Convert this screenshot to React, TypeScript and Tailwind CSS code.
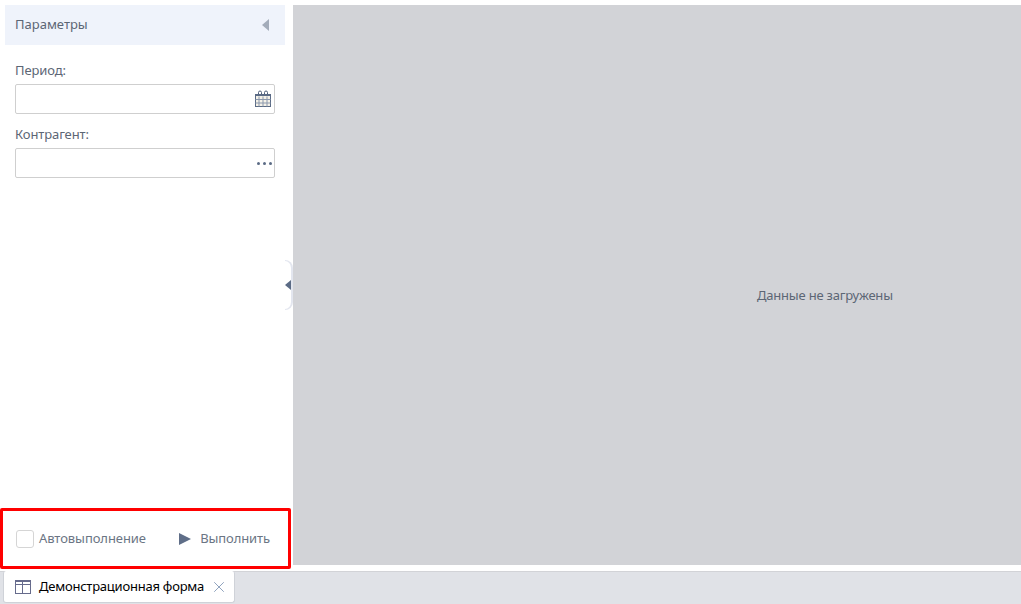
import { X } from "lucide-react";

const font = { fontFamily: '"Noto Sans", sans-serif' };

function CalendarIcon() {
  return (
    <svg className="mr-[1px] mb-[2px]" width="16" height="17" viewBox="0 0 16 17" fill="none">
      <path d="M3.5 4V2.5a1.5 1.5 0 0 1 3 0V4M9.5 4V2.5a1.5 1.5 0 0 1 3 0V4" stroke="#4f5f7a" />
      <rect x="0.5" y="4.5" width="15" height="12" fill="#f4f1e8" stroke="#5b6b85" />
      <path d="M0.5 5h15" stroke="#5b6b85" strokeWidth="2" />
      <path d="M0.5 9.5h15M0.5 13h15M4 6.5v10M8 6.5v10M12 6.5v10" stroke="#8b98ad" />
    </svg>
  );
}

function Field({ label, children }: { label: string; children: React.ReactNode }) {
  return (
    <div>
      <div className="h-[20px] text-[13px] leading-[20px] tracking-[-0.1px] text-[#5c6675]">{label}</div>
      <div className="mt-[4px] h-[30px] border border-[#cfcfcf] rounded-[2px] bg-white flex items-center justify-end pr-[2px]">
        {children}
      </div>
    </div>
  );
}

export default function App() {
  return (
    <div className="h-[604px] w-[1021px] flex flex-col bg-white overflow-hidden" style={font}>
      <div className="flex-1 min-h-0 flex pt-[5px] pb-[6px]">
        {/* Left panel */}
        <div className="w-[293px] shrink-0 flex flex-col relative">
          <div className="ml-[5px] w-[280px] h-[40px] bg-[#eff3fb] flex items-center justify-between pl-[10px] pr-[16px]">
            <span className="text-[13px] text-[#5c6675]">Параметры</span>
            <svg width="7" height="12" viewBox="0 0 7 12">
              <path d="M7 0v12L0 6z" fill="#a3acba" />
            </svg>
          </div>

          <div className="flex-1 pl-[15px] pr-[18px] pt-[15px] flex flex-col gap-[10px]">
            <Field label="Период:">
              <CalendarIcon />
            </Field>
            <Field label="Контрагент:">
              <div className="flex gap-[3px]">
                <span className="w-[3px] h-[3px] rounded-full bg-[#5b6b85]" />
                <span className="w-[3px] h-[3px] rounded-full bg-[#5b6b85]" />
                <span className="w-[3px] h-[3px] rounded-full bg-[#5b6b85]" />
              </div>
            </Field>
          </div>

          {/* Highlighted footer */}
          <div className="h-[61px] mb-[-4px] w-[291px] border-[3px] border-[#ff0000] rounded-[2px] flex items-center pl-[13px] pr-[18px] justify-between">
            <label className="flex items-center gap-[5px]">
              <span className="w-[18px] h-[18px] border border-[#d5d5d5] rounded-[3px] bg-white" />
              <span className="text-[13px] tracking-[-0.07px] text-[#6b7584]">Автовыполнение</span>
            </label>
            <div className="flex items-center gap-[9px]">
              <svg width="12" height="12" viewBox="0 0 12 12">
                <path d="M0 0l12 6-12 6z" fill="#5f6e88" />
              </svg>
              <span className="text-[13px] tracking-[-0.1px] text-[#6b7584]">Выполнить</span>
            </div>
          </div>

          {/* Collapse handle */}
          <div className="absolute right-0 top-[255px] w-[8px] h-[50px] bg-white border-r-2 border-y border-[#e3e6ef] rounded-r-[8px] flex items-center justify-end">
            <svg width="6" height="10" viewBox="0 0 6 10">
              <path d="M6 0v10L0 5z" fill="#5b6b85" />
            </svg>
          </div>
        </div>

        {/* Data area */}
        <div className="flex-1 bg-[#d2d3d7] flex items-center pl-[464px] pt-[22px]">
          <span className="text-[13px] tracking-[-0.2px] text-[#5c6675] whitespace-nowrap">Данные не загружены</span>
        </div>
      </div>

      {/* Tab bar */}
      <div className="h-[33px] shrink-0 bg-[#e0e2e7] pl-[3px] border-t border-[#d2d3d7]">
        <div className="-mt-px w-[232px] h-[32px] bg-white border border-[#cfd2d8] border-t-0 rounded-[3px] flex items-center pl-[11px]">
          <svg width="16" height="14" viewBox="0 0 16 14" fill="none" stroke="#666b8c">
            <rect x="0.5" y="0.5" width="15" height="13" />
            <path d="M0.5 1h15" strokeWidth="2" />
            <path d="M0.5 4.5h15M7.5 0.5v13" />
          </svg>
          <span className="ml-[8px] text-[13px] tracking-[-0.23px] text-black whitespace-nowrap">Демонстрационная форма</span>
          <X className="ml-[6px] text-[#6b84a8]" size={18} strokeWidth={1} />
        </div>
      </div>
    </div>
  );
}
